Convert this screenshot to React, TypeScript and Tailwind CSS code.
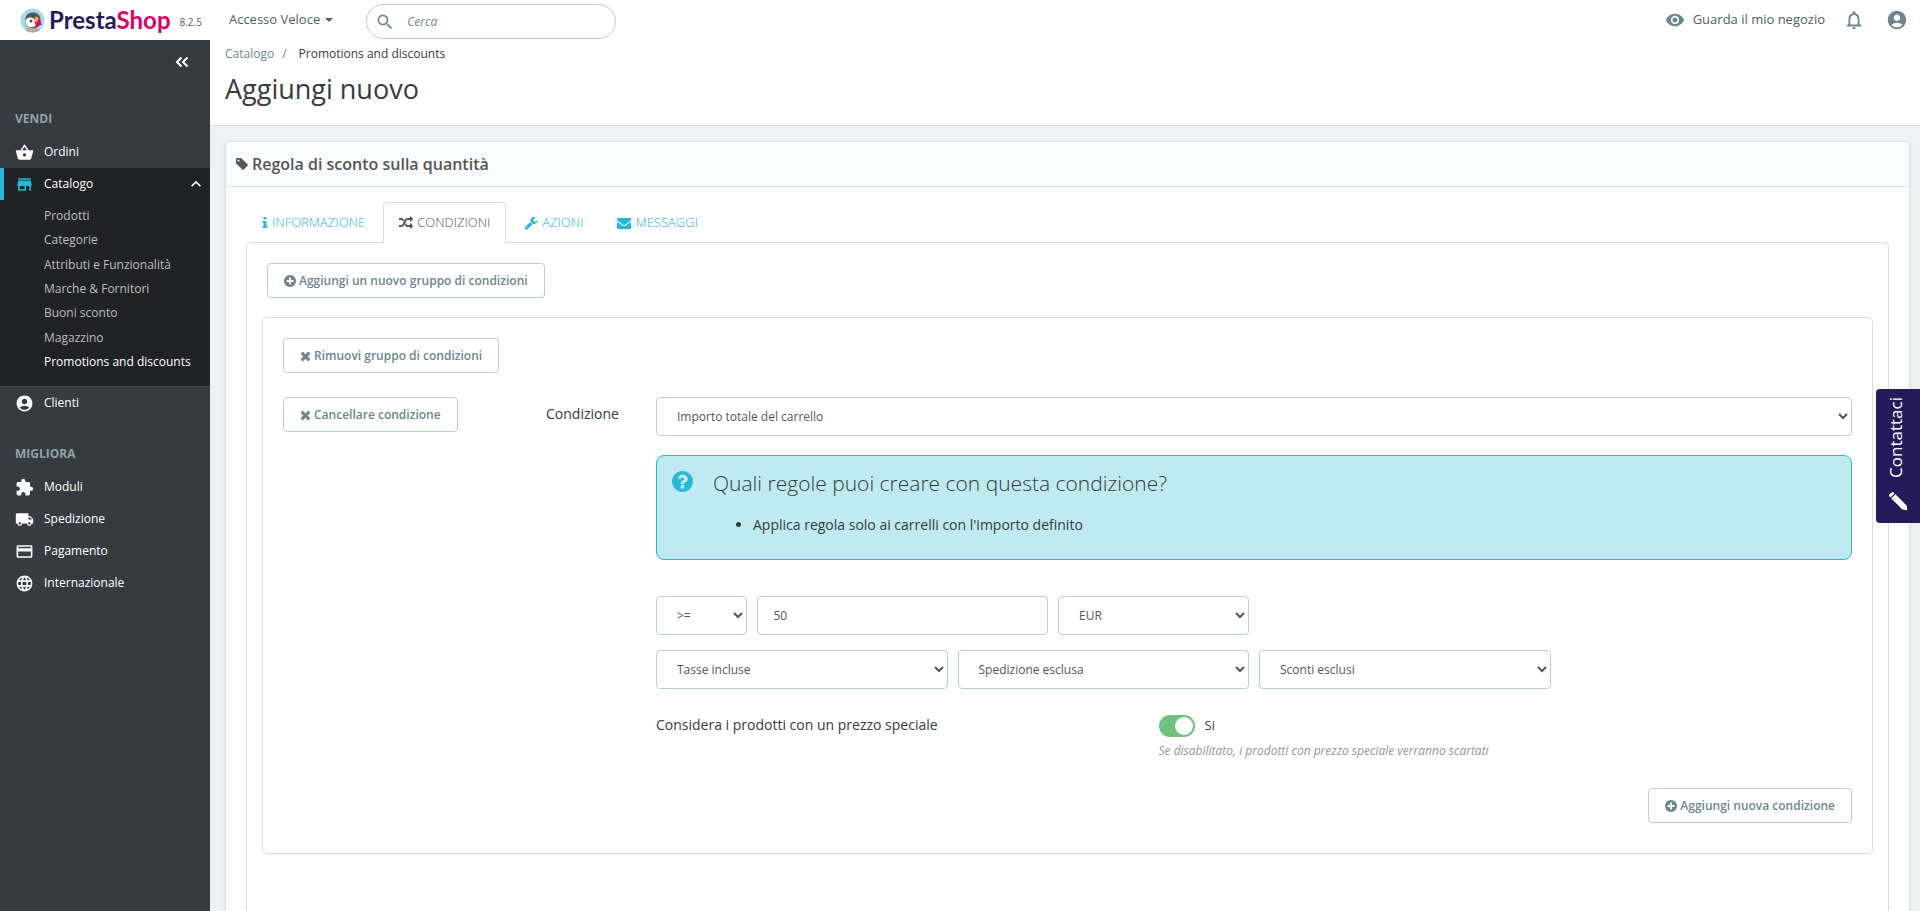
import React from "react";
import {
    MdAccountCircle,
    MdExtension,
    MdKeyboardArrowUp,
    MdLanguage,
    MdLocalShipping,
    MdNotificationsNone,
    MdPayment,
    MdSearch,
    MdShoppingBasket,
    MdStore,
    MdVisibility,
} from "react-icons/md";

const glyphs = {
    tag: "M576 448q0-53-37.5-90.5t-90.5-37.5-90.5 37.5-37.5 90.5 37.5 90.5 90.5 37.5 90.5-37.5 37.5-90.5zm1067 576q0 53-37 90l-491 492q-39 37-91 37-53 0-90-37l-715-716q-38-37-64.5-101t-26.5-117v-416q0-52 38-90t90-38h416q53 0 117 26.5t102 64.5l715 714q37 39 37 91z",
    info: "M1216 1344v128q0 26-19 45t-45 19h-512q-26 0-45-19t-19-45v-128q0-26 19-45t45-19h64v-384h-64q-26 0-45-19t-19-45v-128q0-26 19-45t45-19h384q26 0 45 19t19 45v576h64q26 0 45 19t19 45zm-128-1152v192q0 26-19 45t-45 19h-256q-26 0-45-19t-19-45v-192q0-26 19-45t45-19h256q26 0 45 19t19 45z",
    random: "M666 481q-60 92-137 273-22-45-37-72.5t-40.5-63.5-51-56.5-63-35-81.5-14.5h-224q-14 0-23-9t-9-23v-192q0-14 9-23t23-9h224q250 0 410 225zm1126 799q0 14-9 23l-320 320q-9 9-23 9-13 0-22.5-9.5t-9.5-22.5v-192q-32 0-85 .5t-81 1-73-1-71-5-64-10.5-63-18.5-58-28.5-59-40-55-53.5-56-69.5q59-93 136-273 22 45 37 72.5t40.5 63.5 51 56.5 63 35 81.5 14.5h256v-192q0-14 9-23t23-9q12 0 24 10l319 319q9 9 9 23zm0-896q0 14-9 23l-320 320q-9 9-23 9-13 0-22.5-9.5t-9.5-22.5v-192h-256q-48 0-87 15t-69 45-51 61.5-45 77.5q-32 62-78 171-29 66-49.5 111t-54 105-64 100-74 83-90 68.5-106.5 42-128 16.5h-224q-14 0-23-9t-9-23v-192q0-14 9-23t23-9h224q48 0 87-15t69-45 51-61.5 45-77.5q32-62 78-171 29-66 49.5-111t54-105 64-100 74-83 90-68.5 106.5-42 128-16.5h256v-192q0-14 9-23t23-9q12 0 24 10l319 319q9 9 9 23z",
    wrench: "M448 1472q0-26-19-45t-45-19-45 19-19 45 19 45 45 19 45-19 19-45zm644-420l-682 682q-37 37-90 37-52 0-91-37l-106-108q-38-36-38-90 0-53 38-91l681-681q39 98 114.5 173.5t173.5 114.5zm634-435q0 39-23 106-47 134-164.5 217.5t-258.5 83.5q-185 0-316.5-131.5t-131.5-316.5 131.5-316.5 316.5-131.5q58 0 121.5 16.5t107.5 46.5q16 11 16 28t-16 28l-293 169v224l193 107q5-3 79-48.5t135.5-81 70.5-35.5q15 0 23.5 10t8.5 25z",
    envelope:
        "M1792 710v794q0 66-47 113t-113 47h-1472q-66 0-113-47t-47-113v-794q44 49 101 87 362 246 497 345 57 42 92.5 65.5t94.5 48 110 24.5h2q51 0 110-24.5t94.5-48 92.5-65.5q170-123 498-345 57-39 100-87zm0-294q0 79-49 151t-122 123q-376 261-468 325-10 7-42.5 31t-54 38.5-52 32.5-57.5 27-50 9h-2q-23 0-50-9t-57.5-27-52-32.5-54-38.5-42.5-31q-91-64-262-182.5t-205-142.5q-62-42-117-115.5t-55-136.5q0-78 41.5-130t118.5-52h1472q65 0 112.5 47t47.5 113z",
    plus: "M1344 960v-128q0-26-19-45t-45-19h-256v-256q0-26-19-45t-45-19h-128q-26 0-45 19t-19 45v256h-256q-26 0-45 19t-19 45v128q0 26 19 45t45 19h256v256q0 26 19 45t45 19h128q26 0 45-19t19-45v-256h256q26 0 45-19t19-45zm320-64q0 209-103 385.5t-279.5 279.5-385.5 103-385.5-103-279.5-279.5-103-385.5 103-385.5 279.5-279.5 385.5-103 385.5 103 279.5 279.5 103 385.5z",
    times: "M1490 1322q0 40-28 68l-136 136q-28 28-68 28t-68-28l-294-294-294 294q-28 28-68 28t-68-28l-136-136q-28-28-28-68t28-68l294-294-294-294q-28-28-28-68t28-68l136-136q28-28 68-28t68 28l294 294 294-294q28-28 68-28t68 28l136 136q28 28 28 68t-28 68l-294 294 294 294q28 28 28 68z",
    question:
        "M1024 1376v-192q0-14-9-23t-23-9h-192q-14 0-23 9t-9 23v192q0 14 9 23t23 9h192q14 0 23-9t9-23zm256-672q0-88-55.5-163t-138.5-116-170-41q-243 0-371 213-15 24 8 42l132 100q7 6 19 6 16 0 25-12 53-68 86-92 34-24 86-24 48 0 85.5 26t37.5 59q0 38-20 61t-68 45q-63 28-115.5 86.5t-52.5 125.5v36q0 14 9 23t23 9h192q14 0 23-9t9-23q0-19 21.5-49.5t54.5-49.5q32-18 49-28.5t46-35 44.5-48 28-60.5 12.5-81zm384 192q0 209-103 385.5t-279.5 279.5-385.5 103-385.5-103-279.5-279.5-103-385.5 103-385.5 279.5-279.5 385.5-103 385.5 103 279.5 279.5 103 385.5z",
};

function Glyph({
    name,
    className,
    viewBox = "0 0 1792 1792",
}: {
    name: keyof typeof glyphs;
    className?: string;
    viewBox?: string;
}) {
    return (
        <svg viewBox={viewBox} fill="currentColor" className={className}>
            <path d={glyphs[name]} />
        </svg>
    );
}

const catalogLinks = [
    "Prodotti",
    "Categorie",
    "Attributi e Funzionalità",
    "Marche & Fornitori",
    "Buoni sconto",
    "Magazzino",
    "Promotions and discounts",
];

const improveLinks = [
    { label: "Moduli", icon: MdExtension },
    { label: "Spedizione", icon: MdLocalShipping },
    { label: "Pagamento", icon: MdPayment },
    { label: "Internazionale", icon: MdLanguage },
];

export default function App() {
    return (
        <div className="min-h-screen flex flex-col bg-[#eff1f2] font-['Open_Sans',sans-serif] text-[#363a41]">
            <Header />
            <div className="flex-1 flex flex-row">
                <Sidebar />
                <main className="flex-1 min-w-0 flex flex-col">
                    <div className="bg-white border-b border-[#dddddd] px-[15px] pt-1 pb-[18px]">
                        <nav className="flex flex-row gap-2 text-xs leading-5">
                            <a href="#" className="text-[#6c868e]">
                                Catalogo
                            </a>
                            <span className="text-[#6c868e]">/</span>
                            <span className="pl-1">
                                Promotions and discounts
                            </span>
                        </nav>
                        <h1 className="mt-[7px] text-[27px] leading-9">
                            Aggiungi nuovo
                        </h1>
                    </div>
                    <RulePanel />
                </main>
            </div>
            <button className="fixed right-0 top-[389px] w-11 h-[134px] rounded-l bg-[#251b5b] text-white flex flex-col items-center justify-between pt-2 pb-3 cursor-pointer">
                <span className="[writing-mode:vertical-rl] rotate-180 text-[17px] leading-6 pl-1">
                    Contattaci
                </span>
                <svg viewBox="0 0 20 20" className="w-5 h-5" fill="#fff">
                    <path d="M1.500 3.500 3.500 1.500a1.500 1.500 0 0 1 2.100 0l1 1-4.100 4.100-1-1a1.500 1.500 0 0 1 0-2.100z" />
                    <path d="m3.300 7.500 4.200-4.200L18.600 14.400l.6 4.800-4.800-.6z" />
                </svg>
            </button>
        </div>
    );
}

function Header() {
    return (
        <header className="h-10 bg-white flex flex-row items-center pl-5 pr-3 text-[13px]">
            <a href="#" className="flex flex-row items-center gap-1">
                <Puffin />
                <span className="font-['Lato',sans-serif] font-bold text-2xl leading-8 text-[#251b5b]">
                    Presta<span className="text-[#df0067]">Shop</span>
                </span>
            </a>
            <span className="ml-[9px] pt-1 text-[10px] text-[#4e6167]">
                8.2.5
            </span>
            <button className="ml-[27px] flex flex-row items-center gap-[5px] text-[#4e6167] cursor-pointer">
                Accesso Veloce
                <svg viewBox="0 0 8 4" className="w-2 h-1" fill="currentColor">
                    <path d="M0 0h8L4 4z" />
                </svg>
            </button>
            <label className="ml-[33px] mt-[3px] w-[250px] h-[35px] rounded-full border border-[#bbcdd2] flex flex-row items-center gap-3 px-2">
                <MdSearch className="w-5 h-5 text-[#6c868e]" />
                <input
                    type="text"
                    aria-label="Cerca"
                    placeholder="Cerca"
                    className="flex-1 min-w-0 text-xs outline-none placeholder:italic placeholder:text-[#6c868e]"
                />
            </label>
            <a
                href="#"
                className="ml-auto flex flex-row items-center gap-2 text-[#4e6167]"
            >
                <MdVisibility className="w-5 h-5 text-[#6c868e]" />
                Guarda il mio negozio
            </a>
            <button
                aria-label="Notifiche"
                className="ml-[18px] text-[#6c868e] cursor-pointer"
            >
                <MdNotificationsNone className="w-[22px] h-[22px]" />
            </button>
            <button
                aria-label="Profilo"
                className="ml-[21px] text-[#6c868e] cursor-pointer"
            >
                <MdAccountCircle className="w-[22px] h-[22px]" />
            </button>
        </header>
    );
}

function Puffin() {
    return (
        <svg viewBox="0 0 50 50" className="w-[25px] h-[25px]">
            <clipPath id="badge">
                <circle cx="25" cy="25" r="24" />
            </clipPath>
            <g clipPath="url(#badge)">
                <rect width="50" height="50" fill="#a4dbe8" />
                <path d="M8 50c0-7 6-12 17-12s17 5 17 12z" fill="#bda995" />
                <path
                    d="M10 26c0-12 7-17 16-17 8 0 14 5 15 14 1 12-6 17-15 17S10 36 10 26z"
                    fill="#54535a"
                />
                <path
                    d="M11 24c4-5 9-6 14-4l6 4 1 10c-3 4-8 5-12 4-6-1-10-6-9-14z"
                    fill="#fff"
                />
                <circle cx="22" cy="26" r="3" fill="#4b4a4e" />
                <path
                    d="M31 19c7 1 11 6 12 15-4 0-6 1-9 4-5-6-6-13-3-19z"
                    fill="#df0067"
                />
                <path
                    d="M30 18c3-1 6 0 8 3l-5 9c-4-3-4-8-3-12z"
                    fill="#f8a05a"
                />
            </g>
        </svg>
    );
}

function Sidebar() {
    return (
        <aside className="w-[210px] shrink-0 bg-[#363a41] text-white text-xs">
            <div className="flex flex-row justify-end pt-4 pr-[21px]">
                <button aria-label="Comprimi menu" className="cursor-pointer">
                    <svg
                        viewBox="0 0 14 12"
                        className="w-[14px] h-3"
                        fill="none"
                        stroke="currentColor"
                        strokeWidth="2"
                    >
                        <path d="M6.500 1.500 2 6l4.500 4.500M12.500 1.500 8 6l4.500 4.500" />
                    </svg>
                </button>
            </div>
            <h2 className="mt-[41px] mb-[7px] px-[15px] font-bold leading-5 text-[#8fa4a9]">
                VENDI
            </h2>
            <SidebarLink label="Ordini" icon={MdShoppingBasket} />
            <div className="bg-[#202226] border-b border-[#41454c] pb-3">
                <a
                    href="#"
                    className="h-8 flex flex-row items-center gap-[10px] pr-1 pl-[11px] border-l-4 border-[#25b9d7]"
                >
                    <MdStore className="w-[19px] h-[19px] text-[#25b9d7]" />
                    <span className="flex-1">Catalogo</span>
                    <MdKeyboardArrowUp className="w-5 h-5" />
                </a>
                <ul className="mt-1 h-[170px] flex flex-col justify-between">
                    {catalogLinks.map((label) => (
                        <li key={label}>
                            <a
                                href="#"
                                className={
                                    label === "Promotions and discounts"
                                        ? "block pl-11 leading-6 text-white"
                                        : "block pl-11 leading-6 text-[#bebebe]"
                                }
                            >
                                {label}
                            </a>
                        </li>
                    ))}
                </ul>
            </div>
            <SidebarLink label="Clienti" icon={MdAccountCircle} />
            <h2 className="mt-[25px] mb-[7px] px-[15px] font-bold leading-5 text-[#8fa4a9]">
                MIGLIORA
            </h2>
            {improveLinks.map((item) => (
                <SidebarLink key={item.label} {...item} />
            ))}
        </aside>
    );
}

function SidebarLink({
    label,
    icon: Icon,
}: {
    label: string;
    icon: React.ComponentType<{ className?: string }>;
}) {
    return (
        <a
            href="#"
            className="h-8 flex flex-row items-center gap-[10px] px-[15px]"
        >
            <Icon className="w-[19px] h-[19px]" />
            {label}
        </a>
    );
}

function RulePanel() {
    return (
        <section className="flex-1 flex flex-col mt-[15px] ml-[15px] mr-[10px] bg-white border border-b-0 border-[#dbe6e9] shadow-sm">
            <h2 className="flex flex-row items-center gap-[3px] bg-[#fafbfc] border-b border-[#dbe6e9] px-[9px] py-[10px] text-base leading-6 font-semibold text-[#555555]">
                <Glyph name="tag" className="w-[14px] h-[14px]" />
                Regola di sconto sulla quantità
            </h2>
            <div className="flex-1 flex flex-col px-5 pt-[15px]">
                <div className="flex flex-row items-end gap-[2px]">
                    <Tab icon="info" narrow>
                        INFORMAZIONE
                    </Tab>
                    <Tab icon="random" active>
                        CONDIZIONI
                    </Tab>
                    <Tab icon="wrench">AZIONI</Tab>
                    <Tab icon="envelope">MESSAGGI</Tab>
                </div>
                <div className="flex-1 -mt-px px-[15px] pt-5 border border-b-0 border-[#dddddd] rounded-t-[5px]">
                    <div className="px-[5px]">
                        <OutlineButton icon="plus">
                            Aggiungi un nuovo gruppo di condizioni
                        </OutlineButton>
                    </div>
                    <ConditionGroup />
                </div>
            </div>
        </section>
    );
}

function Tab({
    icon,
    active,
    narrow,
    children,
}: {
    icon: keyof typeof glyphs;
    active?: boolean;
    narrow?: boolean;
    children: React.ReactNode;
}) {
    return (
        <a
            href="#"
            className={
                active
                    ? "relative h-[41px] flex flex-row items-center gap-1 px-[15px] text-[13px] font-light bg-white border border-b-0 border-[#dddddd] rounded-t text-[#555555]"
                    : "h-[41px] flex flex-row items-center gap-1 px-4 text-[13px] font-light text-[#25b9d7]"
            }
        >
            <Glyph
                name={icon}
                viewBox={narrow ? "512 0 768 1792" : undefined}
                className={narrow ? "w-[6px] h-[14px]" : "w-[14px] h-[14px]"}
            />
            {children}
        </a>
    );
}

function OutlineButton({
    icon,
    children,
}: {
    icon: "plus" | "times";
    children: React.ReactNode;
}) {
    return (
        <button className="h-[35px] inline-flex flex-row items-center gap-[3px] px-4 rounded border border-[#bbcdd2] bg-white text-xs font-semibold text-[#6c868e] whitespace-nowrap cursor-pointer">
            {icon === "plus" ? (
                <Glyph
                    name="plus"
                    viewBox="128 0 1536 1792"
                    className="w-3 h-[14px]"
                />
            ) : (
                <Glyph
                    name="times"
                    viewBox="192 0 1408 1792"
                    className="w-[11px] h-[14px]"
                />
            )}
            {children}
        </button>
    );
}

function Select({
    label,
    id,
    value,
    className,
}: {
    label?: string;
    id?: string;
    value: string;
    className?: string;
}) {
    return (
        <select
            id={id}
            aria-label={label}
            className={`w-full h-[39px] px-4 rounded border border-[#bbcdd2] bg-white text-xs text-[#555555] ${className || ""}`}
        >
            <option>{value}</option>
        </select>
    );
}

function ConditionGroup() {
    const [special, setSpecial] = React.useState(true);

    return (
        <div className="mt-[19px] p-5 pb-[30px] border border-[#dddddd] rounded-[5px] shadow-xs">
            <OutlineButton icon="times">
                Rimuovi gruppo di condizioni
            </OutlineButton>
            <div className="mt-6 grid grid-cols-[263px_110px_1fr] items-start">
                <div>
                    <OutlineButton icon="times">
                        Cancellare condizione
                    </OutlineButton>
                </div>
                <label
                    htmlFor="condition"
                    className="pt-[7px] text-sm leading-5"
                >
                    Condizione
                </label>
                <div>
                    <Select
                        id="condition"
                        value="Importo totale del carrello"
                    />
                    <div className="mt-[19px] flex flex-row items-start gap-5 px-[15px] pt-[15px] pb-[22px] rounded-lg border border-[#25b9d7] bg-[#beeaf0]">
                        <Glyph
                            name="question"
                            viewBox="128 128 1536 1536"
                            className="w-[21px] h-[21px] text-[#25b9d7]"
                        />
                        <div>
                            <h3 className="text-[21px] leading-6 font-light">
                                Quali regole puoi creare con questa condizione?
                            </h3>
                            <ul className="mt-[18px] pl-10 list-disc text-sm leading-6">
                                <li>
                                    Applica regola solo ai carrelli con
                                    l'importo definito
                                </li>
                            </ul>
                        </div>
                    </div>
                    <div className="mt-9 grid grid-cols-12 gap-x-[10px] gap-y-[15px]">
                        <Select label="Operatore" value=">=" />
                        <input
                            type="text"
                            aria-label="Importo"
                            defaultValue="50"
                            className="col-span-3 h-[39px] px-4 rounded border border-[#bbcdd2] bg-white text-xs text-[#555555]"
                        />
                        <Select
                            label="Valuta"
                            value="EUR"
                            className="col-span-2"
                        />
                        <Select
                            label="Tasse"
                            value="Tasse incluse"
                            className="col-span-3 col-start-1"
                        />
                        <Select
                            label="Spedizione"
                            value="Spedizione esclusa"
                            className="col-span-3"
                        />
                        <Select
                            label="Sconti"
                            value="Sconti esclusi"
                            className="col-span-3"
                        />
                    </div>
                    <div className="mt-[26px] grid grid-cols-12 gap-x-[10px]">
                        <label
                            htmlFor="special"
                            className="col-span-5 text-sm leading-5"
                        >
                            Considera i prodotti con un prezzo speciale
                        </label>
                        <div className="col-span-7">
                            <div className="flex flex-row items-center gap-[10px] text-[13px]">
                                <input
                                    id="special"
                                    type="checkbox"
                                    checked={special}
                                    onChange={() => setSpecial(!special)}
                                    className="appearance-none w-9 h-[22px] rounded-full bg-[#bbcdd2] checked:bg-[#70c17e] before:block before:w-[18px] before:h-[18px] before:m-[2px] before:rounded-full before:bg-white checked:before:ml-4 cursor-pointer"
                                />
                                {special ? "Si" : "No"}
                            </div>
                            <p className="mt-[5px] text-xs leading-[18px] italic text-[#959595]">
                                Se disabilitato, i prodotti con prezzo speciale
                                verranno scartati
                            </p>
                        </div>
                    </div>
                </div>
            </div>
            <div className="mt-7 flex flex-row justify-end">
                <OutlineButton icon="plus">
                    Aggiungi nuova condizione
                </OutlineButton>
            </div>
        </div>
    );
}
